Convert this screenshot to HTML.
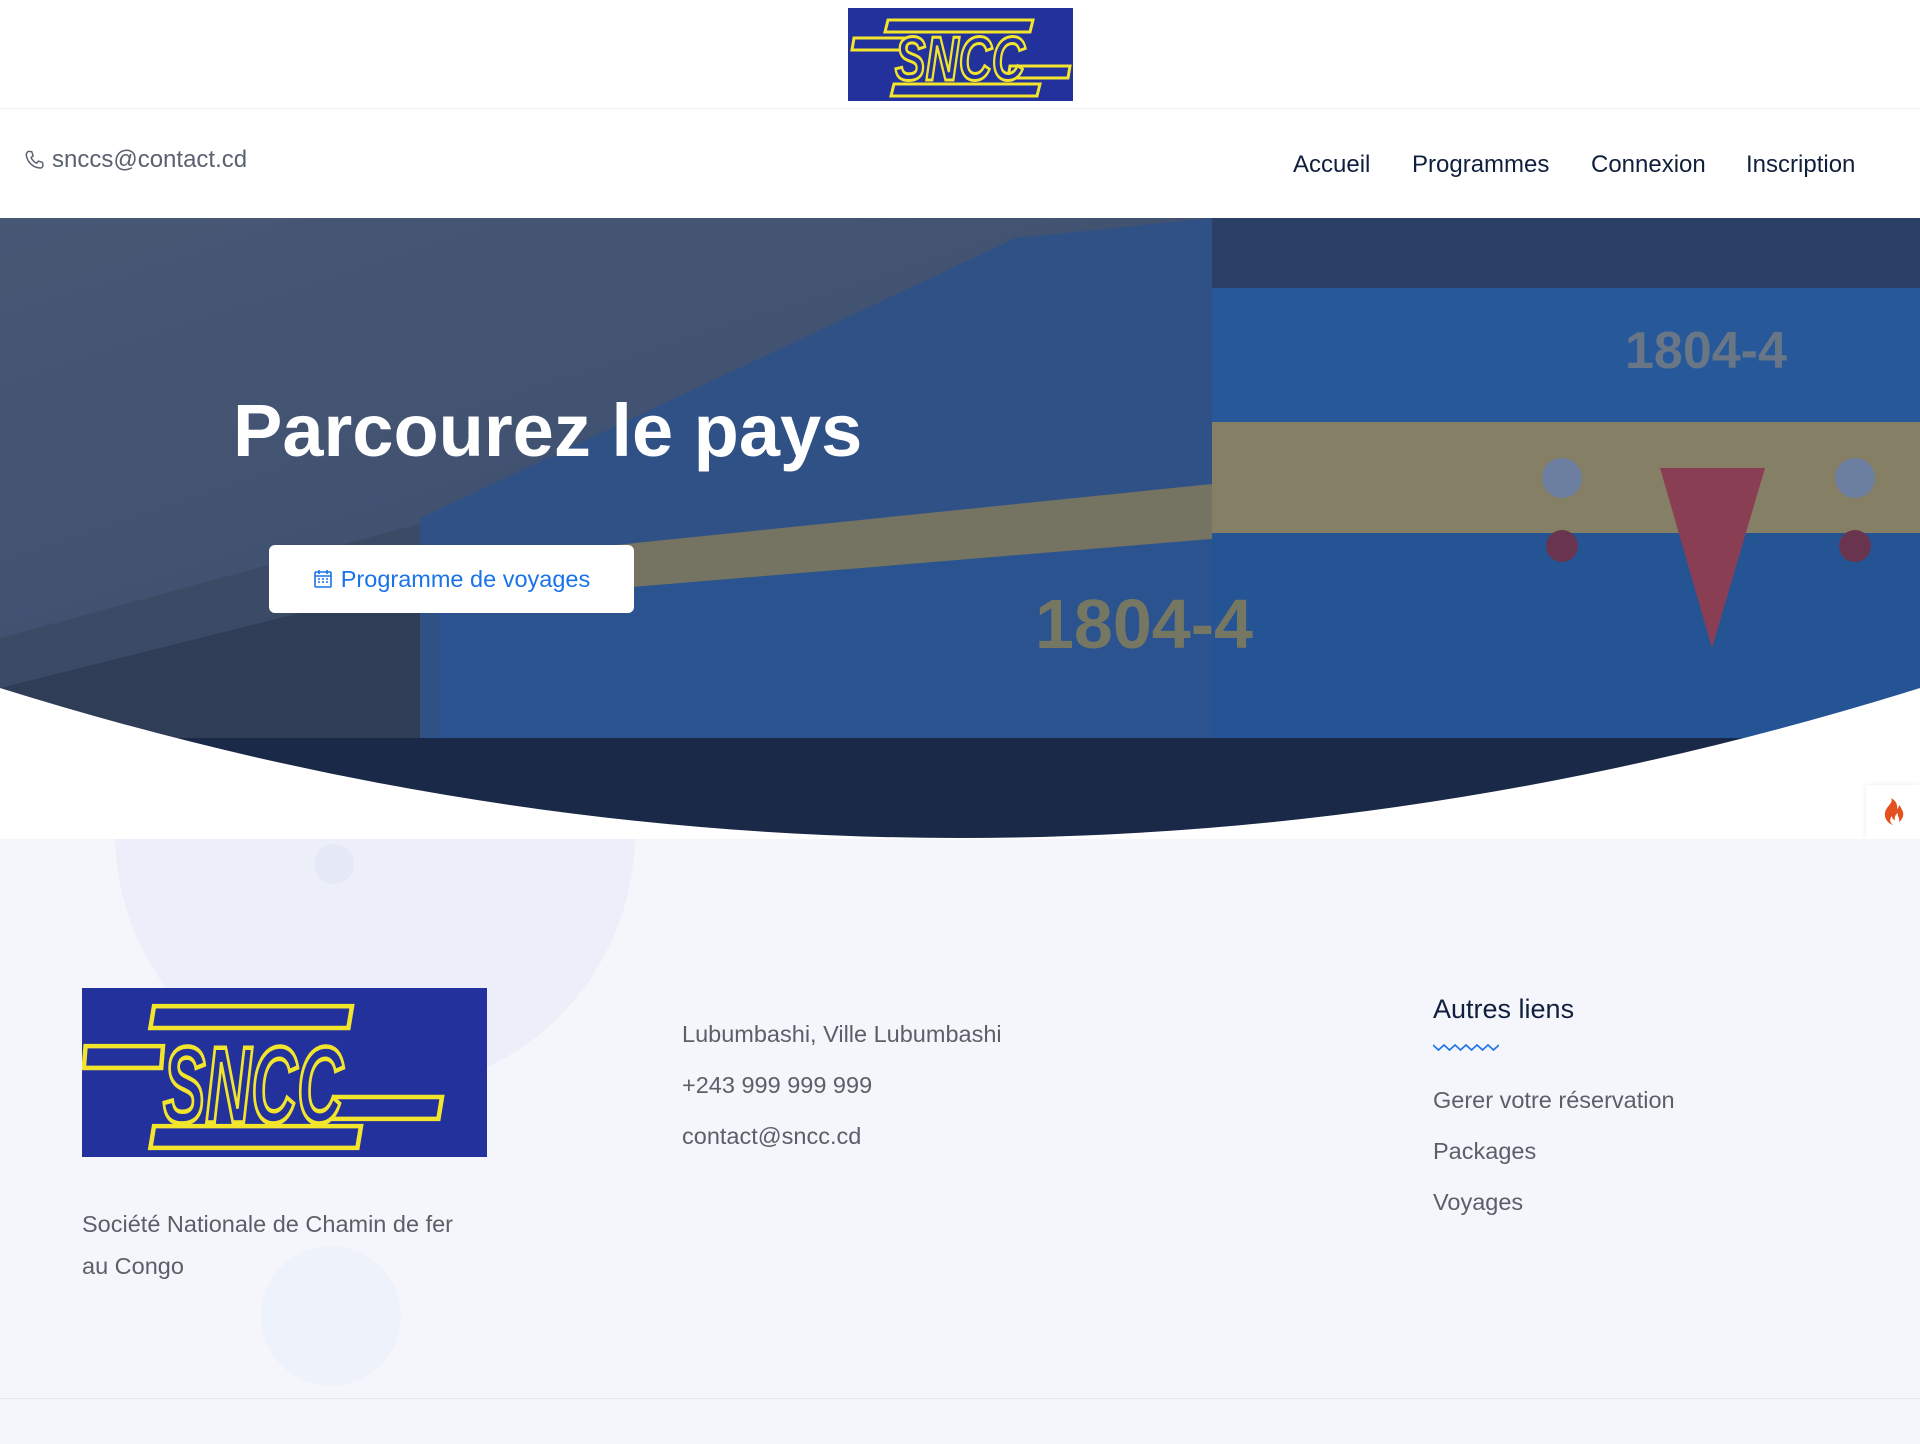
<!DOCTYPE html>
<html><head><meta charset="utf-8">
<style>
*{margin:0;padding:0;box-sizing:border-box}
body{width:1920px;height:1444px;overflow:hidden;background:#fff;font-family:"Liberation Sans",Arial,sans-serif;position:relative}
.abs{position:absolute}
.top{left:0;top:0;width:1920px;height:109px;border-bottom:1px solid #eef0f3;background:#fff}
.nav a{position:absolute;top:151px;font-size:24px;color:#0f1f3d;text-decoration:none;white-space:nowrap}
.hero{left:0;top:218px;width:1920px;height:621px;overflow:hidden}
.footer{left:0;top:839px;width:1920px;height:605px;background:#f5f6fb;overflow:hidden}
.ft{font-size:23.5px;color:#5a5f69;white-space:nowrap}
</style></head><body>
<div class="abs top">
  <svg class="abs" style="left:848px;top:8px" width="225" height="93" viewBox="0 0 225 93">
    <rect width="225" height="93" fill="#22319c"/>
    <g fill="#22319c" stroke="#f2e52c" stroke-width="3">
      <polygon points="40,12 185,12 182,24 37,24"/>
      <polygon points="6,30 60,30 58,42 4,42"/>
      <polygon points="162,58 222,58 220,70 160,70"/>
      <polygon points="46,76 192,76 189,88 43,88"/>
    </g>
    <text x="112" y="72" text-anchor="middle" font-family="Liberation Sans,Arial,sans-serif" font-weight="bold" font-style="italic" font-size="62" fill="#22319c" stroke="#f2e52c" stroke-width="3" textLength="130" lengthAdjust="spacingAndGlyphs">SNCC</text>
  </svg>
</div>
<svg class="abs" style="left:24px;top:149px" width="22" height="22" viewBox="0 0 24 24" fill="none" stroke="#5a6270" stroke-width="1.6" stroke-linejoin="round"><path d="M5 2.5l3.5 0.5 1.5 4.5-2.3 1.8c1.3 2.8 3.4 4.9 6.2 6.2l1.8-2.3 4.5 1.5.5 3.5c-.3 1.5-1.6 2.6-3.2 2.5C9.5 20.2 3.8 14.5 2.5 6.7 2.4 5.1 3.5 2.8 5 2.5z"/></svg>
<div class="abs" style="left:52px;top:146px;font-size:24px;color:#5a6270">snccs@contact.cd</div>
<div class="nav">
  <a style="left:1293px">Accueil</a>
  <a style="left:1412px">Programmes</a>
  <a style="left:1591px">Connexion</a>
  <a style="left:1746px">Inscription</a>
</div>
<div class="abs hero">
  <svg width="1920" height="621" viewBox="0 0 1920 621">
    <defs><linearGradient id="sky" x1="0" y1="0" x2="1" y2="1"><stop offset="0" stop-color="#5a6c88"/><stop offset="1" stop-color="#46587a"/></linearGradient></defs>
    <rect width="1920" height="621" fill="url(#sky)"/>
    <polygon points="0,420 440,300 440,621 0,621" fill="#4b5a72"/>
    <polygon points="0,470 440,360 440,621 0,621" fill="#39475f"/>
    <polygon points="1016,20 1212,0 1212,621 420,621 420,300" fill="#3a63a0"/>
    <polygon points="1212,266 1212,321 440,385 440,345" fill="#9a926d"/>
    <polygon points="1212,321 1212,520 440,540 440,385" fill="#3466ad"/>
    <rect x="1212" y="0" width="708" height="70" fill="#334c74"/>
    <rect x="1212" y="70" width="708" height="134" fill="#2f6cbc"/>
    <rect x="1212" y="204" width="708" height="111" fill="#b1a472"/>
    <rect x="1212" y="315" width="708" height="210" fill="#2c67b5"/>
    <polygon points="1660,250 1765,250 1712,430" fill="#b8485a"/>
    <circle cx="1562" cy="260" r="20" fill="#8fa3c4"/><circle cx="1855" cy="260" r="20" fill="#8fa3c4"/>
    <circle cx="1562" cy="328" r="16" fill="#8a3c52"/><circle cx="1855" cy="328" r="16" fill="#8a3c52"/>
    <text x="1625" y="150" font-family="Liberation Sans,Arial" font-weight="bold" font-size="52" fill="#8a96a0">1804-4</text>
    <text x="1035" y="430" font-family="Liberation Sans,Arial" font-weight="bold" font-size="70" fill="#9c976e">1804-4</text>
    <rect x="0" y="520" width="1920" height="101" fill="#1d2b48"/>
    <rect width="1920" height="621" fill="rgba(20,35,70,0.28)"/>
    <path d="M0,470 Q960,770 1920,470 L1920,621 L0,621 Z" fill="#fff"/>
  </svg>
  <div class="abs" style="left:233px;top:170px;font-size:74px;font-weight:bold;color:#fff;white-space:nowrap">Parcourez le pays</div>
  <div class="abs" style="left:269px;top:327px;width:365px;height:68px;background:#fff;border-radius:6px;font-size:23.5px;color:#1a73e8;display:flex;align-items:center;justify-content:center;gap:8px">
    <svg width="20" height="20" viewBox="0 0 20 20" fill="none" stroke="#1a73e8" stroke-width="1.6"><rect x="2" y="3" width="16" height="15" rx="1"/><path d="M2 7h16M6 1v4M14 1v4M5 10h2M9 10h2M13 10h2M5 13h2M9 13h2M13 13h2"/></svg>Programme de voyages</div>
</div>
<div class="abs" style="left:1866px;top:785px;width:54px;height:54px;background:#fff;box-shadow:0 0 6px rgba(0,0,0,.08);display:flex;align-items:center;justify-content:center">
  <svg width="24" height="30" viewBox="0 0 24 30"><path d="M10 1c3 5-5 8-6 15-1 6 4 11 8 12-3-2-4-6-1-9 0 3 2 4 3 4-1-3 1-6 3-7-1 3 2 5 1 9 3-2 5-6 4-10-1-3-3-5-3-7-2 2-2 4-3 4 1-5-2-9-6-11z" fill="#e4501e"/></svg>
</div>
<div class="abs footer">
  <div class="abs" style="left:115px;top:-266px;width:520px;height:520px;border-radius:50%;background:#eceef9"></div>
  <div class="abs" style="left:314px;top:5px;width:40px;height:40px;border-radius:50%;background:#e5e8f7"></div>
  <div class="abs" style="left:261px;top:407px;width:140px;height:140px;border-radius:50%;background:#eef2fb"></div>
  <svg class="abs" style="left:82px;top:149px" width="405" height="169" viewBox="0 0 225 93" preserveAspectRatio="none">
    <rect width="225" height="93" fill="#22319c"/>
    <g fill="#22319c" stroke="#f2e52c" stroke-width="2.5">
      <polygon points="40,10 150,10 148,22 38,22"/>
      <polygon points="2,32 45,32 44,44 1,44"/>
      <polygon points="140,60 200,60 198,72 138,72"/>
      <polygon points="40,76 155,76 153,88 38,88"/>
    </g>
    <text x="95" y="74" text-anchor="middle" font-family="Liberation Sans,Arial,sans-serif" font-weight="bold" font-style="italic" font-size="60" fill="#22319c" stroke="#f2e52c" stroke-width="2.5" textLength="100" lengthAdjust="spacingAndGlyphs">SNCC</text>
  </svg>
  <div class="abs ft" style="left:82px;top:372px">Société Nationale de Chamin de fer</div>
  <div class="abs ft" style="left:82px;top:414px">au Congo</div>
  <div class="abs ft" style="left:682px;top:182px">Lubumbashi, Ville Lubumbashi</div>
  <div class="abs ft" style="left:682px;top:233px">+243 999 999 999</div>
  <div class="abs ft" style="left:682px;top:284px">contact@sncc.cd</div>
  <div class="abs" style="left:1433px;top:155px;font-size:27px;color:#0f1f3d">Autres liens</div>
  <svg class="abs" style="left:1433px;top:203px" width="66" height="10" viewBox="0 0 66 10"><path d="M0 3 l5.5 5 5.5-5 5.5 5 5.5-5 5.5 5 5.5-5 5.5 5 5.5-5 5.5 5 5.5-5 5.5 5 5.5-5" fill="none" stroke="#1a73e8" stroke-width="1.6"/></svg>
  <div class="abs ft" style="left:1433px;top:248px">Gerer votre réservation</div>
  <div class="abs ft" style="left:1433px;top:299px">Packages</div>
  <div class="abs ft" style="left:1433px;top:350px">Voyages</div>
  <div class="abs" style="left:0;top:559px;width:1920px;height:1px;background:#e3e6ee"></div>
</div>
</body></html>
